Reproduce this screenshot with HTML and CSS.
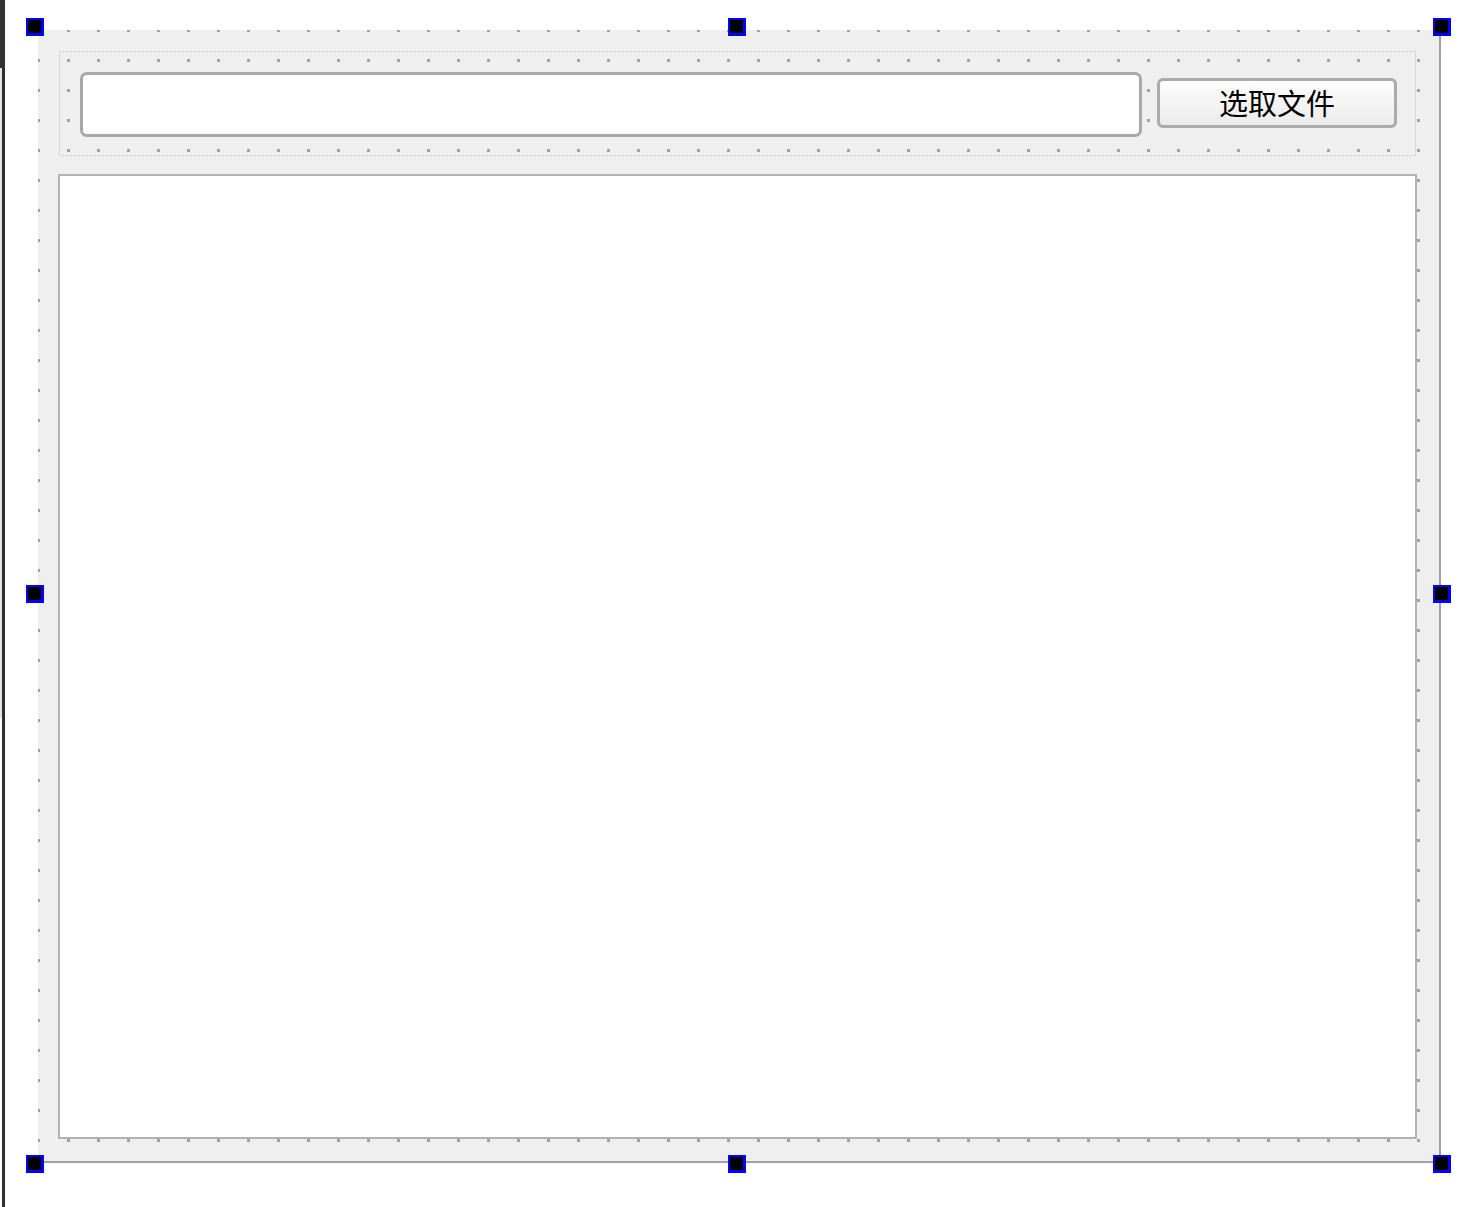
FILE: index.html
```html
<!DOCTYPE html>
<html lang="zh-CN">
<head>
<meta charset="utf-8">
<title>Form</title>
<link rel="stylesheet" href="styles.css">
</head>
<body>
<div class="page">
  <div class="edge-bar"></div>
  <div class="edge-light"></div>
  <div class="form">
    <div class="hlayout">
      <div class="line-edit"></div>
      <button class="btn" type="button">选取文件</button>
    </div>
    <div class="text-edit"></div>
  </div>
  <span class="handle h-tl"></span>
  <span class="handle h-tm"></span>
  <span class="handle h-tr"></span>
  <span class="handle h-ml"></span>
  <span class="handle h-mr"></span>
  <span class="handle h-bl"></span>
  <span class="handle h-bm"></span>
  <span class="handle h-br"></span>
</div>
</body>
</html>
```

FILE: styles.css
```css
html, body {
  margin: 0;
  padding: 0;
  background: #ffffff;
  overflow: hidden;
}

.page {
  position: relative;
  width: 1475px;
  height: 1207px;
  box-sizing: border-box;
  padding: 30px 0 0 38px;
  font-family: "Noto Sans CJK SC", "Noto Sans", sans-serif;
}

/* window edge on the far left */
.edge-bar {
  position: absolute;
  left: 2px;
  top: 0;
  width: 3px;
  height: 1207px;
  background: #2e2e2e;
}
.edge-light {
  position: absolute;
  left: 0;
  top: 0;
  width: 5px;
  height: 68px;
  background: #333333;
}
.edge-light::after {
  content: "";
  position: absolute;
  left: 0;
  top: 68px;
  width: 2px;
  height: 650px;
  background: #e4e4e4;
}

.form {
  width: 1403px;
  height: 1133px;
  box-sizing: border-box;
  border-right: 2px solid #a0a0a0;
  border-bottom: 2px solid #a0a0a0;
  background-color: #efefef;
  background-image: url("data:image/svg+xml,%3Csvg xmlns='http://www.w3.org/2000/svg' width='30' height='30' shape-rendering='crispEdges'%3E%3Crect width='3' height='3' fill='%23a2a2a2'/%3E%3C/svg%3E");
  background-size: 30px 30px;
  background-position: -1px -1px;
  padding: 21px 23px 21px 21px;
  display: flex;
  flex-direction: column;
  gap: 18px;
}

.hlayout {
  height: 105px;
  box-sizing: border-box;
  border: 1px dotted #c0c0c0;
  padding: 20px 18px 18px 20px;
  display: flex;
  align-items: center;
  gap: 15px;
}

.line-edit {
  flex: 1;
  height: 65px;
  box-sizing: border-box;
  border: 3px solid #a8a8a8;
  border-radius: 7px;
  background: #ffffff;
}

.btn {
  width: 240px;
  height: 50px;
  box-sizing: border-box;
  border: 3px solid #aaaaaa;
  border-radius: 6px;
  background: linear-gradient(#fdfdfd, #ebebeb);
  color: #000000;
  font-family: "Noto Sans CJK SC", "Noto Sans", sans-serif;
  font-size: 29px;
  line-height: 1;
  padding: 0 0 2px 0;
  letter-spacing: 0;
  margin-top: -3px;
}

.text-edit {
  height: 965px;
  box-sizing: border-box;
  border: 2px solid #b2b2b2;
  background: #ffffff;
  margin-left: -1px;
  margin-right: -1px;
}

.handle {
  position: absolute;
  width: 13px;
  height: 13px;
  background: #000000;
  border-top: 2px solid #0000ff;
  border-left: 2px solid #0000ff;
  border-right: 3px solid #0000ff;
  border-bottom: 3px solid #0000ff;
  box-sizing: content-box;
}
.h-tl { left: 26px; top: 18px; }
.h-tm { left: 728px; top: 18px; }
.h-tr { left: 1433px; top: 18px; }
.h-ml { left: 26px; top: 585px; }
.h-mr { left: 1433px; top: 585px; }
.h-bl { left: 26px; top: 1155px; }
.h-bm { left: 728px; top: 1155px; }
.h-br { left: 1433px; top: 1155px; }
```
